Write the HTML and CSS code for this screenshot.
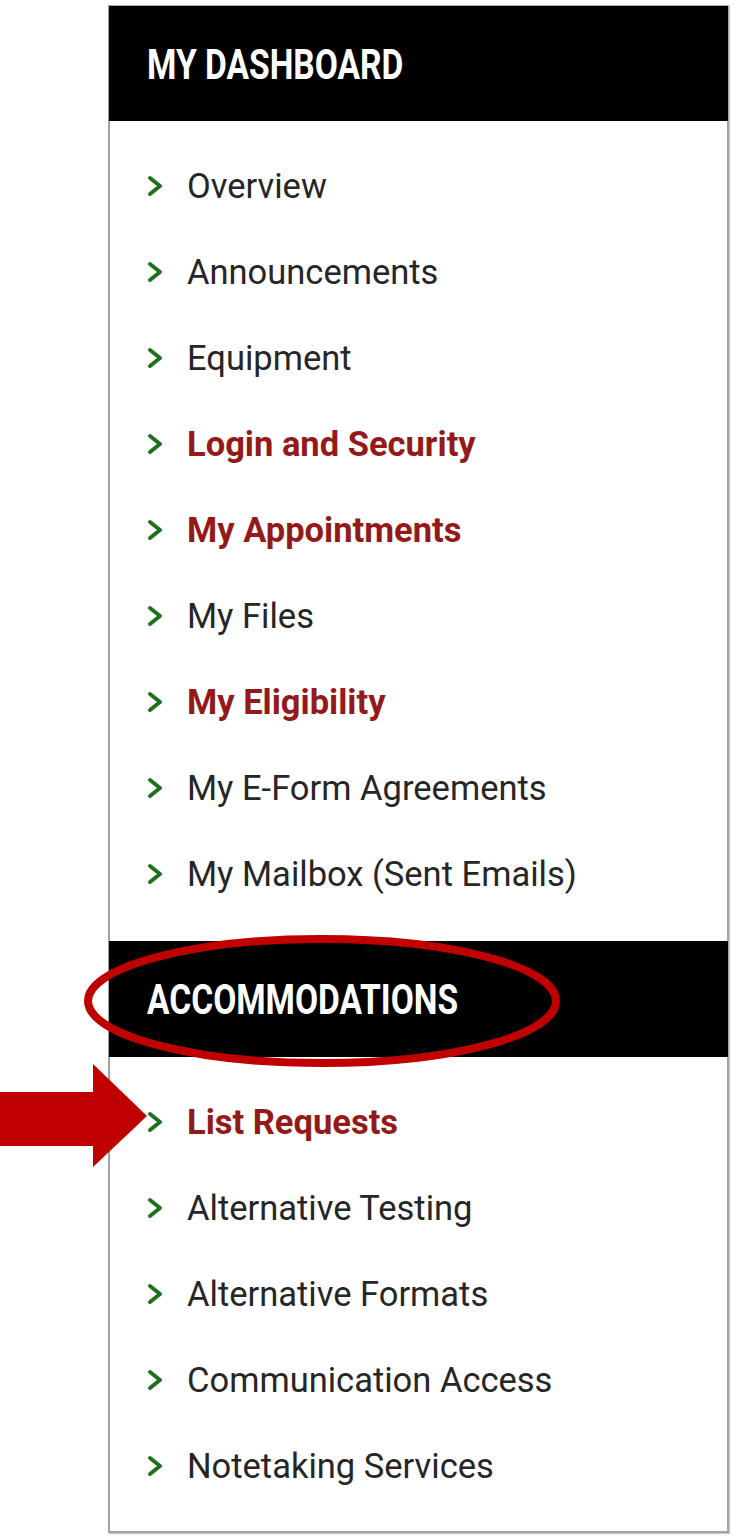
FILE: index.html
```html
<!DOCTYPE html>
<html lang="en">
<head>
  <meta charset="UTF-8">
  <meta name="viewport" content="width=device-width, initial-scale=1.0">
  <title>My Dashboard</title>
  <link rel="stylesheet" href="styles.css">
</head>
<body>
  <div class="page">
    <nav class="sidebar">
      <div class="section-title"><span>MY DASHBOARD</span></div>
      <ul class="menu first">
        <li><svg class="chev" viewBox="0 0 16 24"><polyline points="3,4 13,12 3,20"/></svg><a href="#">Overview</a></li>
        <li><svg class="chev" viewBox="0 0 16 24"><polyline points="3,4 13,12 3,20"/></svg><a href="#">Announcements</a></li>
        <li><svg class="chev" viewBox="0 0 16 24"><polyline points="3,4 13,12 3,20"/></svg><a href="#">Equipment</a></li>
        <li><svg class="chev" viewBox="0 0 16 24"><polyline points="3,4 13,12 3,20"/></svg><a href="#" class="hot">Login and Security</a></li>
        <li><svg class="chev" viewBox="0 0 16 24"><polyline points="3,4 13,12 3,20"/></svg><a href="#" class="hot">My Appointments</a></li>
        <li><svg class="chev" viewBox="0 0 16 24"><polyline points="3,4 13,12 3,20"/></svg><a href="#">My Files</a></li>
        <li><svg class="chev" viewBox="0 0 16 24"><polyline points="3,4 13,12 3,20"/></svg><a href="#" class="hot">My Eligibility</a></li>
        <li><svg class="chev" viewBox="0 0 16 24"><polyline points="3,4 13,12 3,20"/></svg><a href="#">My E-Form Agreements</a></li>
        <li><svg class="chev" viewBox="0 0 16 24"><polyline points="3,4 13,12 3,20"/></svg><a href="#">My Mailbox (Sent Emails)</a></li>
      </ul>
      <div class="section-title tall"><span>ACCOMMODATIONS</span></div>
      <ul class="menu">
        <li><svg class="chev" viewBox="0 0 16 24"><polyline points="3,4 13,12 3,20"/></svg><a href="#" class="hot">List Requests</a></li>
        <li><svg class="chev" viewBox="0 0 16 24"><polyline points="3,4 13,12 3,20"/></svg><a href="#">Alternative Testing</a></li>
        <li><svg class="chev" viewBox="0 0 16 24"><polyline points="3,4 13,12 3,20"/></svg><a href="#">Alternative Formats</a></li>
        <li><svg class="chev" viewBox="0 0 16 24"><polyline points="3,4 13,12 3,20"/></svg><a href="#">Communication Access</a></li>
        <li><svg class="chev" viewBox="0 0 16 24"><polyline points="3,4 13,12 3,20"/></svg><a href="#">Notetaking Services</a></li>
      </ul>
    </nav>

    <!-- annotation marks drawn over the screenshot -->
    <svg class="mark-ellipse" viewBox="0 0 480 136">
      <ellipse cx="240" cy="68" rx="234" ry="62"/>
    </svg>
    <svg class="mark-arrow" viewBox="0 0 148 104">
      <polygon points="0,28 93,28 93,0 147,52 93,103 93,82 0,82"/>
    </svg>
  </div>
</body>
</html>
```

FILE: styles.css
```css
body {
  margin: 0;
  padding: 0;
  background-color: #fff;
  font-family: Roboto, "Liberation Sans", sans-serif;
}
.page {
  position: relative;
  width: 741px;
  height: 1540px;
  padding-top: 5px;
  box-sizing: border-box;
}
.sidebar {
  margin-left: 108px;
  width: 621px;
  border: 2px solid #a3a3a3;
  box-sizing: border-box;
  background-color: #fff;
  box-shadow: 1px 1px 1px #c8c8c8;
}
.section-title {
  background-color: #000;
  height: 115px;
  display: flex;
  align-items: center;
  padding-left: 38px;
  margin: -1px -1px 0 -1px;
}
.section-title.tall {
  height: 116px;
  margin-top: 0;
}
.section-title span {
  display: inline-block;
  color: #fff;
  font-weight: 700;
  font-size: 43px;
  transform: scaleX(0.78);
  transform-origin: left center;
  white-space: nowrap;
}
.menu {
  list-style: none;
  margin: 0;
  padding: 22px 0;
}
.menu.first {
  padding-bottom: 24px;
}
.menu li {
  height: 86px;
  display: flex;
  align-items: center;
  padding-left: 37px;
}
.chev {
  width: 16px;
  height: 24px;
  margin-right: 24px;
  flex-shrink: 0;
}
.chev polyline {
  fill: none;
  stroke: #22701e;
  stroke-width: 4;
  stroke-linecap: round;
  stroke-linejoin: round;
}
.menu a {
  color: #262626;
  text-decoration: none;
  font-size: 34.5px;
  white-space: nowrap;
}
.menu a.hot {
  color: #941a1a;
  font-weight: 700;
}
.mark-ellipse {
  position: absolute;
  left: 82px;
  top: 933px;
  width: 480px;
  height: 136px;
}
.mark-ellipse ellipse {
  fill: none;
  stroke: #c00000;
  stroke-width: 8;
}
.mark-arrow {
  position: absolute;
  left: 0;
  top: 1064px;
  width: 148px;
  height: 104px;
}
.mark-arrow polygon {
  fill: #c00000;
}
```
